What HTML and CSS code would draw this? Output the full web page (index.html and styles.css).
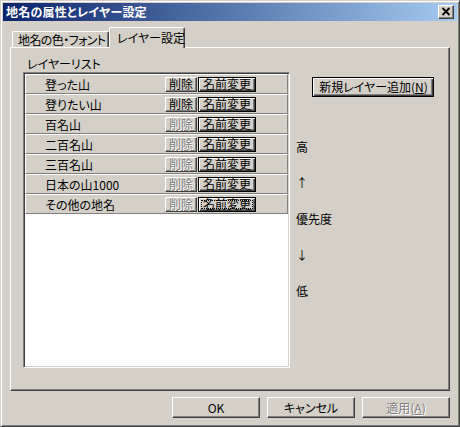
FILE: index.html
```html
<!DOCTYPE html>
<html lang="ja">
<head>
<meta charset="utf-8">
<title>地名の属性とレイヤー設定</title>
<link rel="stylesheet" href="styles.css">
</head>
<body>
<div class="window">
  <div class="titlebar">
    <span class="title">地名の属性とレイヤー設定</span>
    <span class="close">
      <svg width="10" height="9" viewBox="0 0 10 9"><path d="M1.5 1 L8.5 8 M8.5 1 L1.5 8" stroke="#000" stroke-width="1.8" fill="none"/></svg>
    </span>
  </div>
  <div class="body">
    <div class="tabs">
      <div class="tab">地名の色・フォント</div>
      <div class="tab active">レイヤー設定</div>
    </div>
    <div class="panel">
      <div class="list-col">
        <div class="group-label">レイヤーリスト</div>
        <div class="listbox">
          <div class="row"><span class="name">登った山</span><span class="btn small del">削除</span><span class="btn small ren">名前変更</span></div>
          <div class="row"><span class="name">登りたい山</span><span class="btn small del">削除</span><span class="btn small ren">名前変更</span></div>
          <div class="row"><span class="name">百名山</span><span class="btn small del disabled">削除</span><span class="btn small ren">名前変更</span></div>
          <div class="row"><span class="name">二百名山</span><span class="btn small del disabled">削除</span><span class="btn small ren">名前変更</span></div>
          <div class="row"><span class="name">三百名山</span><span class="btn small del disabled">削除</span><span class="btn small ren">名前変更</span></div>
          <div class="row"><span class="name">日本の山1000</span><span class="btn small del disabled">削除</span><span class="btn small ren">名前変更</span></div>
          <div class="row"><span class="name">その他の地名</span><span class="btn small del disabled">削除</span><span class="btn small ren focused">名前変更</span></div>
        </div>
      </div>
      <div class="side">
        <div class="btn add">新規レイヤー追加(<u>N</u>)</div>
        <div class="priority">
          <span>高</span>
          <span>↑</span>
          <span>優先度</span>
          <span>↓</span>
          <span>低</span>
        </div>
      </div>
    </div>
    <div class="actions">
      <div class="btn push">OK</div>
      <div class="btn push">キャンセル</div>
      <div class="btn push disabled">適用(<u>A</u>)</div>
    </div>
  </div>
</div>
</body>
</html>
```

FILE: styles.css
```css
* { box-sizing: border-box; }

html, body {
  margin: 0;
  padding: 0;
  background: #d4d0c8;
}

body {
  font-family: "Noto Sans CJK JP", "Noto Sans", sans-serif;
  font-size: 12px;
  line-height: 14px;
  color: #000;
  font-feature-settings: "palt";
}

.window {
  width: 460px;
  height: 427px;
  background: #d4d0c8;
  border: 1px solid;
  border-color: #d4d0c8 #404040 #404040 #d4d0c8;
  box-shadow: inset 1px 1px #fff, inset -1px -1px #808080;
  padding: 2px;
}

.titlebar {
  height: 18px;
  background: linear-gradient(to right, #0a246a, #a6caf0);
  display: flex;
  align-items: center;
  justify-content: space-between;
  padding: 0 3px 0 3px;
}

.title {
  color: #fff;
  font-weight: bold;
  font-size: 12px;
  letter-spacing: 0.2px;
}

.close {
  width: 16px;
  height: 14px;
  background: #d4d0c8;
  border: 1px solid;
  border-color: #fff #404040 #404040 #fff;
  box-shadow: inset -1px -1px #808080;
  display: flex;
  align-items: center;
  justify-content: center;
  padding-bottom: 1px;
}

.close svg { display: block; }

.body {
  padding: 6px 7px 0 7px;
}

.tabs {
  display: flex;
  align-items: flex-end;
  height: 20px;
  padding-left: 2px;
}

.tab {
  height: 16px;
  display: flex;
  align-items: center;
  white-space: nowrap;
  padding: 1px 0 0 5px;
  width: 97px;
  letter-spacing: -0.6px;
  border-top: 1px solid #fff;
  border-left: 1px solid #fff;
  border-right: 1px solid #404040;
  box-shadow: inset -1px 0 #808080;
  border-radius: 2px 2px 0 0;
  background: #d4d0c8;
}

.tab.active {
  position: relative;
  z-index: 1;
  height: 21px;
  width: 76px;
  margin-bottom: -1px;
  letter-spacing: 0;
  padding: 0 0 1px 7px;
}

.panel {
  width: 440px;
  height: 344px;
  border: 1px solid;
  border-color: #fff #404040 #404040 #fff;
  box-shadow: inset -1px -1px #808080;
  display: flex;
  padding: 9px 0 0 12px;
}

.group-label {
  margin-left: 4px;
  margin-bottom: 1px;
  height: 14px;
}

.listbox {
  width: 267px;
  height: 296px;
  background: #fff;
  border: 1px solid;
  border-color: #808080 #fff #fff #808080;
  box-shadow: inset 1px 1px #404040, inset -1px -1px #d4d0c8;
  padding: 1px;
}

.row {
  height: 20px;
  display: flex;
  align-items: center;
  background: #d4d0c8;
  border-top: 1px solid #fff;
  border-left: 1px solid #fff;
  border-bottom: 1px solid #808080;
  border-right: 1px solid #808080;
}

.name {
  width: 139px;
  padding-left: 19px;
  padding-top: 1px;
}

.btn {
  display: flex;
  align-items: center;
  justify-content: center;
  background: #d4d0c8;
  white-space: nowrap;
}

.btn.small {
  height: 15px;
  line-height: 12px;
}

.del {
  width: 32px;
  border: 1px solid;
  border-color: #fff #404040 #404040 #fff;
  box-shadow: inset -1px -1px #808080;
}

.ren {
  width: 58px;
  margin-left: 1px;
  height: 16px;
  border: 1px solid #000;
  box-shadow: inset 1px 1px #fff, inset -1px -1px #404040, inset -2px -2px #808080;
}

.ren.focused {
  outline: 1px dotted #000;
  outline-offset: -4px;
}

.disabled {
  color: #808080;
  text-shadow: 1px 1px 0 #fff;
}

.side {
  margin-left: 6px;
  padding-top: 20px;
  display: flex;
  flex-direction: column;
  align-items: flex-start;
}

.add {
  margin-left: 16px;
  width: 122px;
  height: 20px;
  border: 1px solid #000;
  box-shadow: inset 1px 1px #fff, inset -1px -1px #404040, inset -2px -2px #808080;
  padding-left: 1px;
}

.add u { text-decoration: underline; }

.priority {
  margin-top: 43px;
  display: flex;
  flex-direction: column;
  gap: 22px;
}

.priority span {
  height: 14px;
}

.actions {
  display: flex;
  justify-content: flex-end;
  gap: 7px;
  margin-top: 6px;
  padding-right: 0;
}

.push {
  width: 88px;
  height: 21px;
  border: 1px solid;
  border-color: #fff #404040 #404040 #fff;
  box-shadow: inset -1px -1px #808080;
}
```
